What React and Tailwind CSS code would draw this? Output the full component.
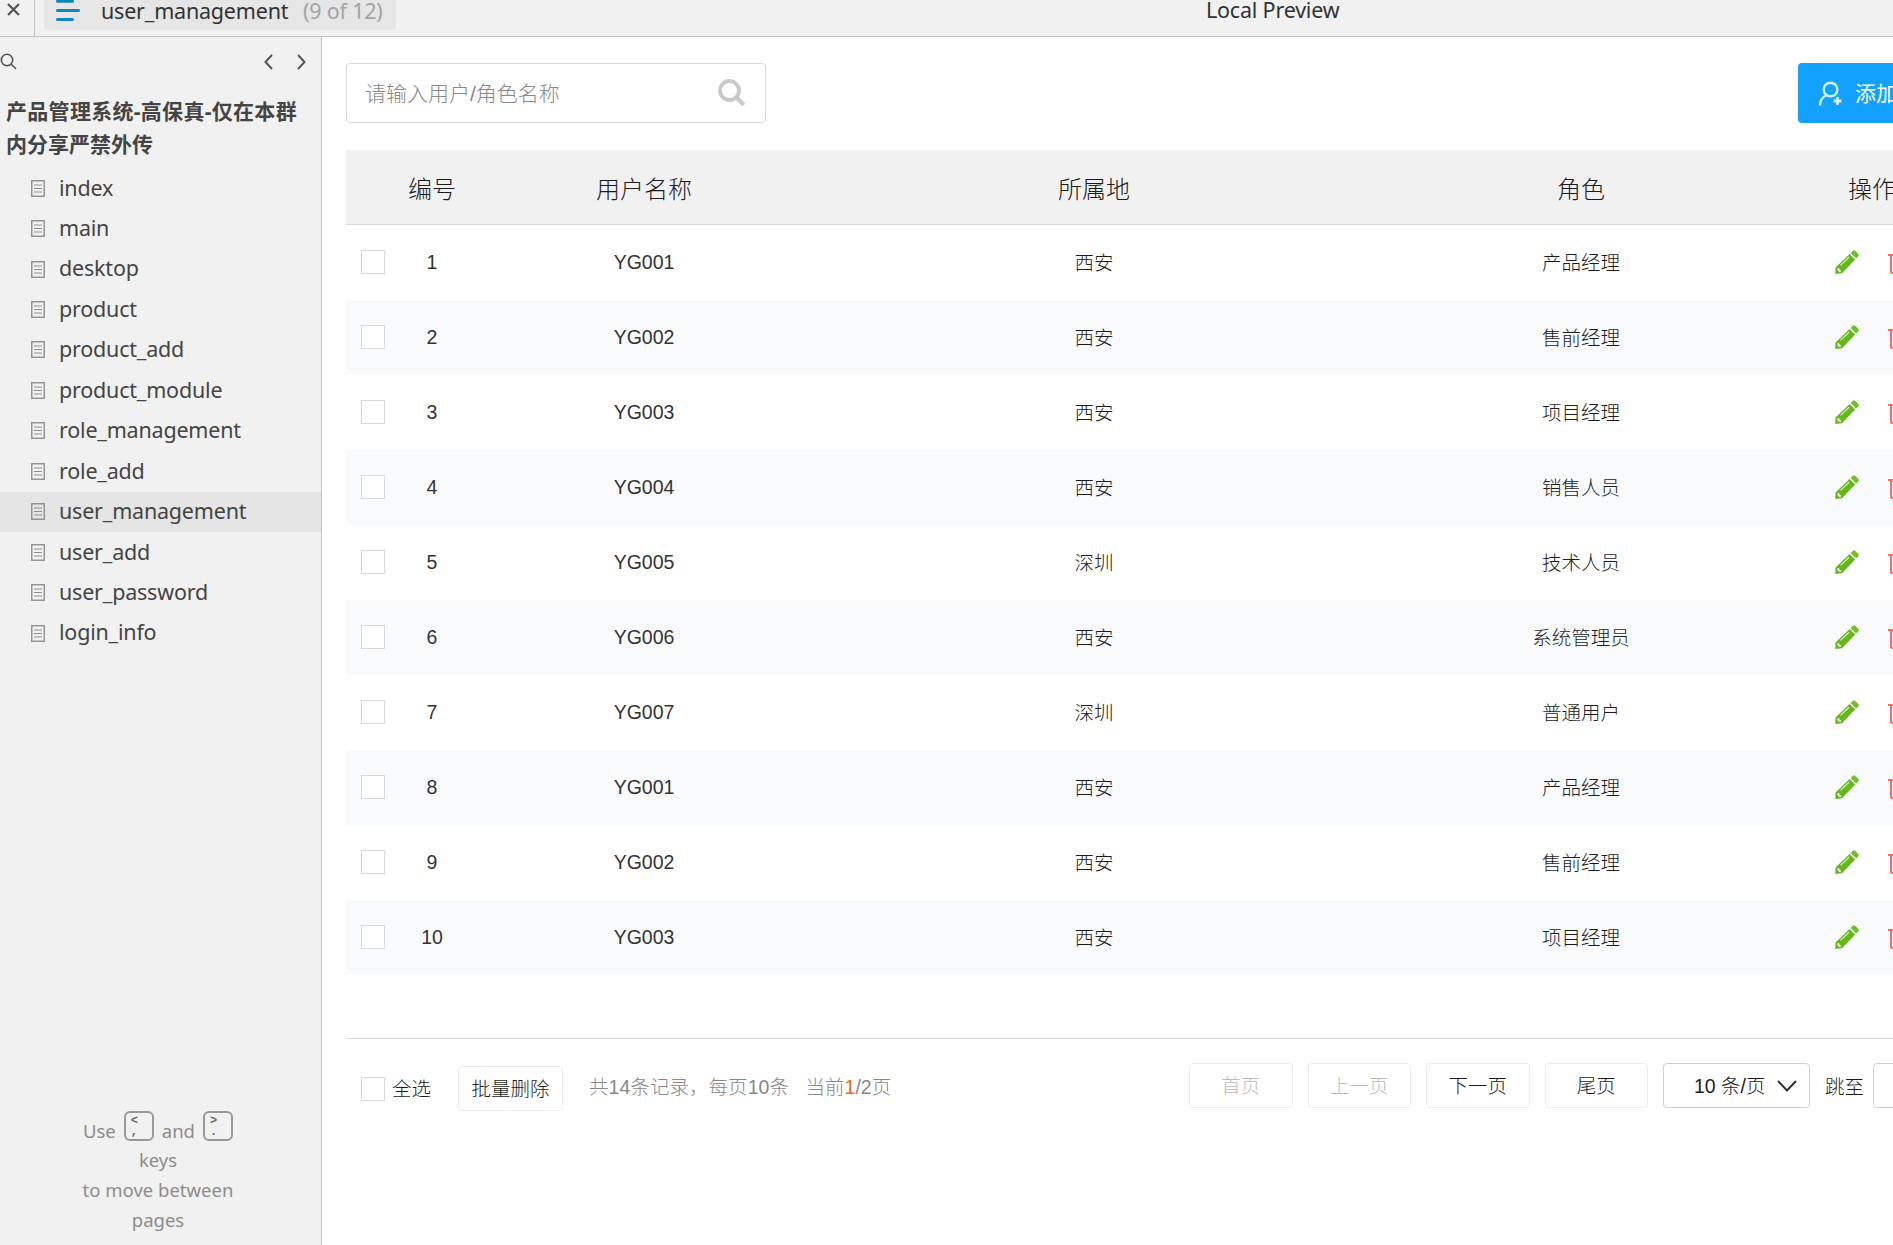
import React from "react";

const pages = [
  "index",
  "main",
  "desktop",
  "product",
  "product_add",
  "product_module",
  "role_management",
  "role_add",
  "user_management",
  "user_add",
  "user_password",
  "login_info",
];

const users = [
  { id: 1, name: "YG001", place: "西安", role: "产品经理" },
  { id: 2, name: "YG002", place: "西安", role: "售前经理" },
  { id: 3, name: "YG003", place: "西安", role: "项目经理" },
  { id: 4, name: "YG004", place: "西安", role: "销售人员" },
  { id: 5, name: "YG005", place: "深圳", role: "技术人员" },
  { id: 6, name: "YG006", place: "西安", role: "系统管理员" },
  { id: 7, name: "YG007", place: "深圳", role: "普通用户" },
  { id: 8, name: "YG001", place: "西安", role: "产品经理" },
  { id: 9, name: "YG002", place: "西安", role: "售前经理" },
  { id: 10, name: "YG003", place: "西安", role: "项目经理" },
];

const columns = "grid grid-cols-[50px_72px_352px_548px_426px_156px] items-center";

function PageIcon() {
  return (
    <svg width="14" height="17" viewBox="0 0 14 17" fill="none" stroke="#8f8f8f" className="shrink-0">
      <rect x="0.75" y="0.75" width="12.5" height="15.5" strokeWidth="1.4" />
      <path d="M3 5h8M3 8.500h8M3 12h8" strokeWidth="1.2" />
    </svg>
  );
}

function Pencil() {
  return (
    <svg width="24" height="24" viewBox="0 0 24 24" className="shrink-0">
      <path d="M17.6 1 Q19 -0.4 20.4 1 L23.2 3.8 Q24.5 5.2 23.2 6.6 L21.2 8.6 L15.6 3 Z" fill="#72bf2c" />
      <path d="M14.6 4 L20.2 9.6 L7 23.2 L0.3 24 L0.5 17.6 Z" fill="#66b81a" />
      <path d="M5.5 15.4 L14 7.3" stroke="#d9efc4" strokeWidth="1.2" />
      <path d="M2.4 18.2 L4.2 18.2 L4.6 19.8 L6.2 20.4 L5.6 22 L4.2 21.8 L2.4 20 Z" fill="#f4faee" />
    </svg>
  );
}

function Trash() {
  return (
    <svg width="21" height="24" viewBox="0 0 21 24" fill="none" stroke="#f56c6c" strokeWidth="2" className="shrink-0">
      <path d="M0 5h21M7 4.5V1.5h7v3M3 5v16.5q0 1.5 1.5 1.5h12q1.5 0 1.5-1.5V5" />
    </svg>
  );
}

function CheckBox() {
  return <span className="block size-6 shrink-0 border border-[#d9d9d9] bg-white" />;
}

function Key({ top, bottom }) {
  return (
    <span className="flex h-[30px] w-[30px] flex-col rounded-md border-2 border-[#999] pt-px pl-[5px] text-left font-['Liberation_Mono',monospace] text-[12px] font-bold text-[#666]">
      <span className="h-[12px] leading-[14px]">{top}</span>
      <span className="h-[12px] leading-[12px]">{bottom}</span>
    </span>
  );
}

function PageButton({ children, disabled }) {
  return (
    <button
      className={`h-[45px] w-[103.5px] shrink-0 rounded border border-[#ebebeb] bg-white pt-[2px] ${disabled ? "text-[#bbb]" : "text-[#1c1c1c]"}`}
    >
      {children}
    </button>
  );
}

function TopBar() {
  return (
    <header className="flex h-[37px] shrink-0 border-b border-[#c2c2c2] bg-[#f1f1f1] text-[21.5px] tracking-[-0.2px] text-[#333]">
      <div className="flex w-[35px] shrink-0 items-start border-r border-[#c2c2c2] pt-[3px] pl-[7px]">
        <svg width="13" height="13" viewBox="0 0 13 13" stroke="#555" strokeWidth="2.2">
          <path d="M1 1l11 11M12 1L1 12" />
        </svg>
      </div>
      <div className="ml-[9px] flex h-[30px] w-[352px] shrink-0 items-start rounded-b bg-[#e6e6e6] pl-[12px]">
        <svg width="24" height="22" viewBox="0 0 24 22" stroke="#0d86bf" strokeWidth="3" strokeLinecap="round" className="shrink-0">
          <path d="M1.5 1.2h15M1.5 10.5h21M1.5 19.5h15" />
        </svg>
        <span className="ml-[21px] w-[202px] leading-[21px] whitespace-nowrap">user_management</span>
        <span className="leading-[21px] whitespace-nowrap text-[#a3a3a3]">(9 of 12)</span>
      </div>
      <div className="ml-[810px] leading-[19px] whitespace-nowrap">Local Preview</div>
    </header>
  );
}

function Sidebar() {
  return (
    <aside className="flex w-[322px] shrink-0 flex-col border-r border-[#c2c2c2] bg-[#f1f1f1]">
      <div className="flex h-[49px] items-center justify-between pr-[15px]">
        <svg width="17" height="17" viewBox="0 0 17 17" fill="none" stroke="#555" strokeWidth="1.6">
          <circle cx="7" cy="7" r="5.7" />
          <path d="M11 11l5 5" />
        </svg>
        <div className="flex gap-[24px]">
          <svg width="9" height="16" viewBox="0 0 9 16" fill="none" stroke="#555" strokeWidth="2">
            <path d="M8 1L1.500 8 8 15" />
          </svg>
          <svg width="9" height="16" viewBox="0 0 9 16" fill="none" stroke="#555" strokeWidth="2">
            <path d="M1 1l6.500 7L1 15" />
          </svg>
        </div>
      </div>
      <h1 className="mt-[9px] pl-[6px] text-[21px] leading-[33px] font-bold tracking-[0.3px] whitespace-nowrap text-[#444]">
        产品管理系统-高保真-仅在本群
        <br />
        <span className="tracking-normal">内分享严禁外传</span>
      </h1>
      <ul className="mt-[7px] text-[21.5px] tracking-[-0.2px] text-[#444]">
        {pages.map((page) => (
          <li
            key={page}
            className={`flex h-[40.45px] items-center gap-[14px] pl-[31px] ${page === "user_management" ? "bg-[#e5e5e5]" : ""}`}
          >
            <PageIcon />
            <span className="pb-px">{page}</span>
          </li>
        ))}
      </ul>
      <div className="mt-auto mb-[10px] pr-[5px] text-center text-[18.5px] leading-[30px] text-[#8c8c8c]">
        <div className="flex justify-center gap-2">
          <span className="pt-[5px]">Use</span>
          <Key top="<" bottom="," />
          <span className="pt-[5px]">and</span>
          <Key top=">" bottom="." />
        </div>
        <div className="-mt-px">keys</div>
        <div>to move between</div>
        <div>pages</div>
      </div>
    </aside>
  );
}

function Toolbar() {
  return (
    <div className="flex justify-between">
      <div className="flex h-[60px] w-[420px] items-center justify-between rounded border border-[#d9d9d9] bg-white pr-[20px] pl-[18px]">
        <span className="pt-px text-[21px] text-[#888]">请输入用户/角色名称</span>
        <svg width="28" height="28" viewBox="0 0 28 28" fill="none" stroke="#c9c9c9" strokeLinecap="round">
          <circle cx="12.500" cy="11.500" r="9.500" strokeWidth="3.800" />
          <path d="M20 19l5.500 5.500" strokeWidth="4.400" />
        </svg>
      </div>
      <button className="mr-[8px] flex h-[60px] w-[144px] items-center rounded bg-[#12a1ff] pl-[20px] text-[21px] font-normal whitespace-nowrap text-white">
        <svg width="25" height="25" viewBox="0 0 25 25" fill="none" stroke="#d5f0ff" strokeWidth="2.400" className="shrink-0">
          <circle cx="12.500" cy="8.500" r="6.800" />
          <path d="M2 24.500q0-7.500 7-10.500" />
          <path d="M19.500 16v8M15.500 20h8" strokeWidth="2.800" />
        </svg>
        <span className="ml-[12px] pt-px">添加用户</span>
      </button>
    </div>
  );
}

function UserTable() {
  return (
    <div className="mt-[27px] text-[19.5px]">
      <div className={`${columns} h-[75px] border-b border-[#d9d9d9] bg-[#f1f1f1] pt-[5px] text-center text-[24px]`}>
        <span />
        <span className="whitespace-nowrap">编号</span>
        <span>用户名称</span>
        <span>所属地</span>
        <span>角色</span>
        <span>操作</span>
      </div>
      {users.map((u) => (
        <div key={u.id} className={`${columns} h-[75px] text-center ${u.id % 2 === 0 ? "bg-[#f8fafc]" : "bg-white"}`}>
          <span className="pb-[2px] pl-[15px]">
            <CheckBox />
          </span>
          <span className="text-[#333]">{u.id}</span>
          <span className="text-[#333]">{u.name}</span>
          <span className="pt-[2px]">{u.place}</span>
          <span className="pt-[2px]">{u.role}</span>
          <span className="flex justify-center gap-[29px] pb-[2px]">
            <Pencil />
            <Trash />
          </span>
        </div>
      ))}
    </div>
  );
}

function Pagination() {
  return (
    <div className="mt-[63px] flex items-start border-t border-[#d9d9d9] pt-[24px] text-[19.5px] whitespace-nowrap">
      <label className="mt-[14px] ml-[15px] flex h-6 items-center gap-[7px]">
        <CheckBox />
        <span className="pt-[2px]">全选</span>
      </label>
      <button className="mt-[3px] ml-[27px] h-[45px] w-[105px] shrink-0 rounded border border-[#ebebeb] bg-white pt-[2px]">批量删除</button>
      <span className="ml-[26px] w-[600px] shrink-0 pt-px leading-[47px] tracking-[0.05px] text-[#888]">
        共14条记录，每页10条&nbsp;&nbsp; 当前<span className="text-[#f60]">1</span>/2页
      </span>
      <div className="flex shrink-0 gap-[15px]">
        <PageButton disabled>首页</PageButton>
        <PageButton disabled>上一页</PageButton>
        <PageButton>下一页</PageButton>
        <PageButton>尾页</PageButton>
        <div className="flex h-[45px] w-[147px] shrink-0 items-center justify-between rounded border border-[#d0d0d0] bg-white pr-[12px] pl-[30px]">
          <span className="pt-[3px]">10 条/页</span>
          <svg width="20" height="12" viewBox="0 0 20 12" fill="none" stroke="#333" strokeWidth="2">
            <path d="M1 1l9 9.500L19 1" />
          </svg>
        </div>
        <span className="pt-px leading-[47px]">跳至</span>
      </div>
      <span className="ml-[9px] h-[45px] w-[60px] shrink-0 rounded border border-[#d0d0d0] bg-white" />
    </div>
  );
}

export default function App() {
  return (
    <div className="flex h-screen w-screen flex-col overflow-hidden bg-white font-['Noto_Sans','Noto_Sans_CJK_SC',sans-serif]">
      <TopBar />
      <div className="flex min-h-0 flex-1">
        <Sidebar />
        <main className="min-w-0 flex-1 overflow-hidden pt-[26px] pl-[24px] font-['Liberation_Sans','Noto_Sans_CJK_SC',sans-serif] font-light text-[#1c1c1c]">
          <div className="w-[1604px]">
            <Toolbar />
            <UserTable />
            <Pagination />
          </div>
        </main>
      </div>
    </div>
  );
}
